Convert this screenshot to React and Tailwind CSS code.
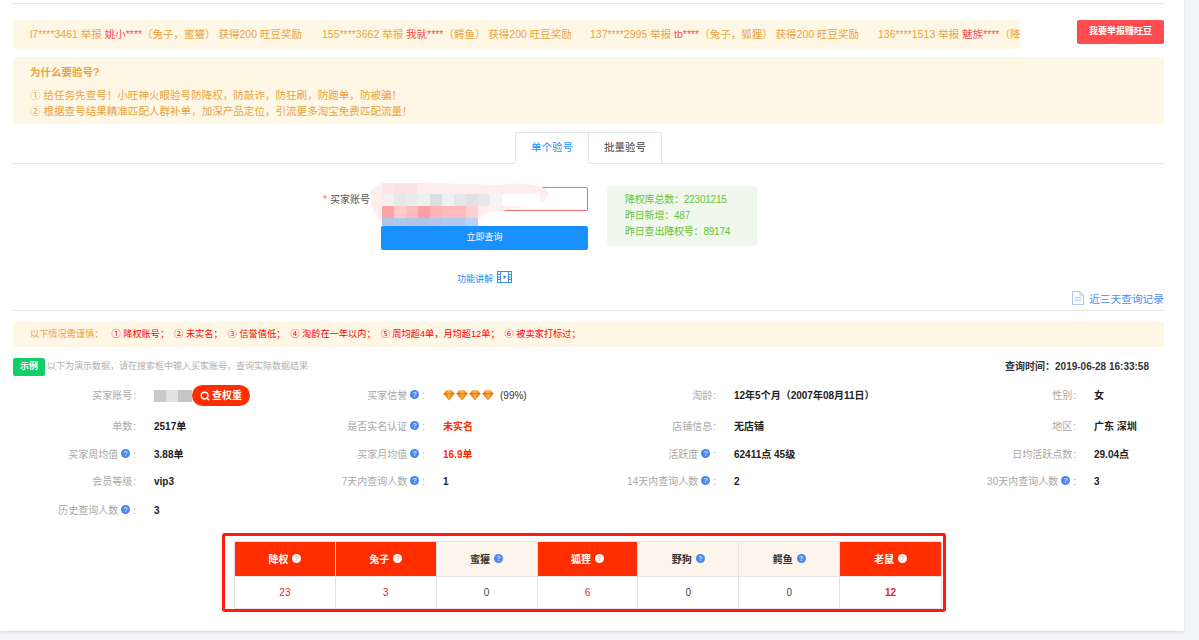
import { Search } from 'lucide-react';

const font = { fontFamily: '"Liberation Sans", "Noto Sans CJK SC", sans-serif' };

const reports = [
    { phone: 'l7****3461', name: '姚小****', tags: '（兔子，蜜獾）', prize: ' 获得200 旺豆奖励', width: 'w-[292px]' },
    { phone: '155****3662', name: '我就****', tags: '（鳄鱼）', prize: ' 获得200 旺豆奖励', width: 'w-[268px]' },
    { phone: '137****2995', name: 'tb****', tags: '（兔子，狐狸）', prize: ' 获得200 旺豆奖励', width: 'w-[288px]' },
    { phone: '136****1513', name: '魅族****', tags: '（降', width: 'w-[142px]' },
];

const warnings = ['① 降权账号；', '② 未实名；', '③ 信誉值低；', '④ 淘龄在一年以内；', '⑤ 周均超4单，月均超12单；', '⑥ 被卖家打标过；'];

const rows = [
    [
        { label: '买家账号', account: true },
        { label: '买家信誉', tip: true, gems: true },
        { label: '淘龄', value: '12年5个月（2007年08月11日）' },
        { label: '性别', value: '女' },
    ],
    [
        { label: '单数', value: '2517单' },
        { label: '是否实名认证', tip: true, value: '未实名', red: true },
        { label: '店铺信息', value: '无店铺' },
        { label: '地区', value: '广东 深圳' },
    ],
    [
        { label: '买家周均值', tip: true, value: '3.88单' },
        { label: '买家月均值', tip: true, value: '16.9单', red: true },
        { label: '活跃度', tip: true, value: '62411点 45级' },
        { label: '日均活跃点数', value: '29.04点' },
    ],
    [
        { label: '会员等级', value: 'vip3' },
        { label: '7天内查询人数', tip: true, value: '1' },
        { label: '14天内查询人数', tip: true, value: '2' },
        { label: '30天内查询人数', tip: true, value: '3' },
    ],
    [{ label: '历史查询人数', tip: true, value: '3' }],
];

const tags = [
    { name: '降权', count: 23, hit: true },
    { name: '兔子', count: 3, hit: true },
    { name: '蜜獾', count: 0 },
    { name: '狐狸', count: 6, hit: true },
    { name: '野狗', count: 0 },
    { name: '鳄鱼', count: 0 },
    { name: '老鼠', count: 12, hit: true },
];

function Help({ white }) {
    return (
        <span className={`inline-flex w-[9px] h-[9px] -mt-[2px] rounded-full items-center justify-center text-[7px] leading-none font-bold shrink-0 ${white ? 'bg-white text-[#f5b5a5]' : 'bg-[#4a86f0] text-[#cfe0ff]'}`}>
            ?
        </span>
    );
}

function Gem() {
    return (
        <svg width="12" height="11" viewBox="0 0 12 11">
            <path d="M3 .5h6l2.6 3.2L6 10.5.4 3.7z" fill="#f08a1d" />
            <path d="M3 .5 4.2 3.7 6 10.5 7.8 3.7 9 .5z" fill="#f9b04a" />
            <path d="M.4 3.7h11.2" stroke="#d9670d" strokeWidth=".7" />
        </svg>
    );
}

// mosaic over the account field in the screenshot
function Redaction() {
    const top = ['#ffe6e6', '#ffe1e1', '#ffe3e3'];
    const gray = ['#f2f2f3', '#e6e7ea', '#eaebed', '#eeeff0', '#dcdfe2', '#eff0f0', '#e5e6e9', '#dfe1e4', '#e6e7ea', '#f4f4f5'];
    const pink = ['#ffa3a6', '#ffcaca', '#ffbcbc', '#ff9fa1', '#ffb5b8', '#ffbabd', '#ffbabd', '#ffd0d0'];
    const blue = ['#b0c3e8', '#b0c7ee', '#b1c3e8', '#b1c3e8', '#b0c8f0', '#b2cbf3', '#b2cbf3', '#b8d3fb'];
    return (
        <svg className="absolute left-[368px] top-[182px]" width="182" height="46" viewBox="0 0 182 46">
            <path d="M3 8C9 1 40 1 70 1l60 2c20-3 42-1 49 5 3 6-1 14-19 16-15 2-18 5-40 6l-8 6-4 8H18C7 38 1 20 3 8z" fill="#ffeeee" />
            <rect x="134" y="12" width="38" height="12" fill="#ffffff" />
            {top.map((c, i) => <rect key={i} x={14 + i * 12} y="1" width="12" height="11" fill={c} />)}
            {gray.map((c, i) => <rect key={i} x={14 + i * 12} y="12" width="12" height="12" fill={c} />)}
            {pink.map((c, i) => <rect key={i} x={14 + i * 12} y="24" width="12" height="12" fill={c} />)}
            {blue.map((c, i) => <rect key={i} x={14 + i * 12} y="36" width="12" height="8" fill={c} />)}
        </svg>
    );
}

function InfoValue({ item }) {
    if (item.account) {
        return (
            <div className="flex items-center">
                <span className="w-[12px] h-[12px] bg-[#c9c9c9]" />
                <span className="w-[12px] h-[12px] bg-[#e2e2e2]" />
                <span className="w-[14px] h-[12px] bg-[#c6c6c6]" />
                <span className="flex items-center gap-[2px] h-[21px] w-[58px] justify-center rounded-full bg-[#ff2d00] text-white text-[10px] font-bold">
                    <Search size={10} strokeWidth={3.5} />
                    查权重
                </span>
            </div>
        );
    }
    if (item.gems) {
        return (
            <div className="flex items-center gap-[1px] text-[#333]">
                <Gem /><Gem /><Gem /><Gem />
                <span className="ml-[5px]">(99%)</span>
            </div>
        );
    }
    return <span className={`font-bold ${item.red ? 'text-[#ff2d00]' : 'text-[#222]'}`}>{item.value}</span>;
}

export default function App() {
    return (
        <div className="min-h-[640px] bg-[#f3f5f9] overflow-hidden" style={font}>
            <div className="relative w-[1184px] h-[631px] bg-white pt-[3px] px-[13px] pr-[20px] shadow-sm">
                <div className="border-t border-[#e8e8e8] pt-[16px]">
                    {/* Faixa de denúncias */}
                    <div className="flex justify-between items-start">
                        <div className="w-[1007px] h-[29px] rounded-[2px] bg-[#fff7e6] pl-[17px] flex items-center whitespace-pre text-[10.5px] text-[#e8a33d]">
                            {reports.map((r) => (
                                <span key={r.phone} className={`shrink-0 ${r.width}`}>
                                    {r.phone} 举报 <span className="text-[#ff4d4f]">{r.name}</span>{r.tags}{r.prize}
                                </span>
                            ))}
                        </div>
                        <button className="w-[87px] h-[24px] rounded-[2px] bg-[#ff4d4f] text-white text-[9px] font-bold">我要举报赚旺豆</button>
                    </div>

                    <div className="mt-[8px] h-[67px] rounded-[2px] bg-[#fff7e6] pl-[17px] pt-[7px] text-[#e8a33d] text-[10.55px] leading-[16.5px]">
                        <p className="font-bold text-[10.5px] mb-[6px]">为什么要验号?</p>
                        <p>① 给任务先查号！小旺神火眼验号防降权，防敲诈，防狂刷，防跑单，防被骗！</p>
                        <p>② 根据查号结果精准匹配人群补单，加深产品定位，引流更多淘宝免费匹配流量！</p>
                    </div>

                    {/* Abas */}
                    <div className="mt-[8px] h-[32px] border-b border-[#e4e7ed] flex pl-[502px] text-[10.5px]">
                        <div className="w-[74px] h-[32px] border border-[#dfe4ed] border-b-white rounded-tl-[2px] bg-white text-[#1890ff] flex items-center justify-center">单个验号</div>
                        <div className="w-[73px] h-[31px] border border-l-0 border-b-0 border-[#dfe4ed] rounded-tr-[2px] text-[#444] flex items-center justify-center">批量验号</div>
                    </div>

                    {/* Formulário de consulta */}
                    <div className="flex mt-[22px]">
                        <div className="w-[357px] h-[24px] mt-[1px] flex items-center justify-end text-[10px] text-[#555]">
                            <span className="text-[#f56c6c] mr-[3px]">*</span>买家账号
                        </div>
                        <div className="w-[207px] ml-[11px] mt-[1px]">
                            <div className="h-[24px] rounded-[2px] border border-[#f56c6c] bg-white" />
                            <button className="mt-[15px] w-full h-[24px] rounded-[2px] bg-[#1890ff] text-white text-[9px]">立即查询</button>
                        </div>
                        <div className="w-[150px] h-[60px] ml-[19px] rounded-[2px] bg-[#f0f8ec] pl-[18px] pt-[6px] text-[10px] tracking-[-0.2px] leading-[16px] text-[#67c23a]">
                            <p>降权库总数：22301215</p>
                            <p>昨日新增：487</p>
                            <p>昨日查出降权号：89174</p>
                        </div>
                    </div>
                    <Redaction />

                    <div className="flex items-center pl-[444px] mt-[21px] h-[14px] text-[9px] text-[#1890ff]">
                        <span className="mt-[3px]">功能讲解</span>
                        <svg className="ml-[4px] -mt-[2px]" width="15" height="12" viewBox="0 0 15 12" fill="none" stroke="#3d8fe0">
                            <rect x=".5" y=".5" width="14" height="11" />
                            <path d="M3.5.5v11M11.5.5v11M.5 3.5h3M.5 6h3M.5 8.5h3M11.5 3.5h3M11.5 6h3M11.5 8.5h3" />
                            <path d="M6.5 4v4l3-2z" fill="#3d8fe0" stroke="none" />
                        </svg>
                    </div>

                    <div className="flex justify-end items-center h-[16px] mt-[6px] text-[10.7px] text-[#4a8cf0] whitespace-nowrap">
                        <svg className="mr-[5px] -mt-[3px]" width="12" height="14" viewBox="0 0 12 14" fill="none" stroke="#a9c6f2">
                            <path d="M.5.5h7.5l3.5 3.5v9.5H.5zM8 .5V4h3.5M3 6.5h6M3 9h6" />
                        </svg>
                        近三天查询记录
                    </div>
                    <div className="mt-[3px] border-t border-[#e8e8e8]" />

                    {/* Avisos */}
                    <div className="mt-[11px] h-[25px] rounded-[2px] bg-[#fff7e6] pl-[17px] flex items-center text-[9.2px] whitespace-nowrap">
                        <span className="text-[#e8a33d] mr-[8px]">以下情况需谨慎：</span>
                        <span className="flex gap-[5px] text-[#ff0000]">
                            {warnings.map((w) => <span key={w}>{w}</span>)}
                        </span>
                    </div>

                    <div className="relative mt-[11px] h-[18px] flex items-center">
                        <span className="w-[32px] h-[18px] rounded-[2px] bg-[#13ce66] text-white text-[9px] font-bold flex items-center justify-center">示例</span>
                        <span className="ml-[2px] text-[9px] text-[#b0b0b0]">以下为演示数据，请在搜索框中输入买家账号，查询实际数据结果</span>
                        <span className="absolute right-[15px] top-[1px] text-[10px] font-bold text-[#333]">查询时间：2019-06-28 16:33:58</span>
                    </div>

                    {/* Dados do comprador */}
                    <div className="mt-[3px] grid grid-cols-[123px_189px_100px_191px_100px_260px_100px_88px] grid-rows-[33px_29px_27px_27px_31px] items-center text-[10px] whitespace-nowrap">
                        {rows.flat().map((item) => (
                            <div key={item.label} className="contents">
                                <div className="flex items-center justify-end text-[#a8a8a8]">
                                    {item.label}
                                    {item.tip && <span className="ml-[3px] flex"><Help /></span>}
                                    <span className={item.tip ? 'ml-[3px]' : 'ml-[1px]'}>:</span>
                                </div>
                                <div className="pl-[18px]"><InfoValue item={item} /></div>
                            </div>
                        ))}
                    </div>

                    {/* Tabela de etiquetas */}
                    <div className="mt-[7px] ml-[209px] w-[724px] h-[79px] rounded-[3px] border-[3px] border-[#ff1a0f] pt-[5px] pl-[9px]">
                        <div className="w-[708px] grid grid-cols-7 border border-[#e5e5e5] text-[10px]">
                            {tags.map((t, i) => (
                                <div key={t.name} className={`h-[34px] flex items-center justify-center gap-[4px] font-bold ${i < 6 ? 'border-r border-[#e5e5e5]' : ''} ${t.hit ? 'bg-[#ff2d00] text-white' : 'bg-[#fdf4eb] text-[#333]'}`}>
                                    {t.name}
                                    <Help white={t.hit} />
                                </div>
                            ))}
                            {tags.map((t, i) => (
                                <div key={t.name} className={`h-[32px] flex items-center justify-center border-t border-[#e5e5e5] ${i < 6 ? 'border-r' : ''} ${t.hit ? 'text-[#e6212e]' : 'text-[#444]'} ${t.count === 12 ? 'font-bold' : ''}`}>
                                    {t.count}
                                </div>
                            ))}
                        </div>
                    </div>
                </div>
            </div>
        </div>
    );
}
